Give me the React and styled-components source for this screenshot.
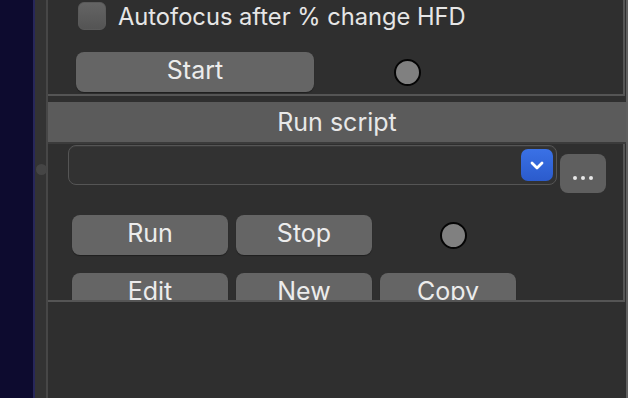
import styled, { createGlobalStyle } from "styled-components";

const GlobalStyle = createGlobalStyle`
  html, body {
    margin: 0;
    padding: 0;
    background: #0d0b2f;
    overflow: hidden;
  }
  * {
    box-sizing: border-box;
  }
`;

const Screen = styled.div`
  display: flex;
  width: 628px;
  height: 398px;
  font-family: Inter, "Liberation Sans", sans-serif;
  color: #e2e2e2;
`;

const Desktop = styled.div`
  width: 35px;
  background: #0d0b2f;
  border-right: 2px solid #27275a;
`;

const Splitter = styled.div`
  position: relative;
  width: 13px;
  background: #333333;
  border-right: 2px solid #474747;
`;

const SplitHandle = styled.div`
  position: absolute;
  left: 1px;
  top: 164px;
  width: 11px;
  height: 11px;
  border-radius: 50%;
  background: #454545;
`;

const Panel = styled.div`
  flex: 1;
  display: flex;
  flex-direction: column;
  background: #2f2f2f;
  border-right: 2px solid #5f5f5f;
`;

const Group = styled.div`
  height: ${(p) => p.$height}px;
  border-right: 2px solid #555555;
  border-bottom: 2px solid #555555;
  overflow: hidden;
`;

const TopGroup = styled(Group)`
  padding: 2px 0 0 28px;
  margin-right: 1px;
`;

const CheckRow = styled.label`
  display: flex;
  align-items: center;
  gap: 12px;
  height: 28px;
  font-size: 23.7px;
  padding-left: 2px;
  color: #e6e6e6;
`;

const Checkbox = styled.span`
  width: 28px;
  height: 28px;
  border-radius: 6px;
  background: linear-gradient(#646464, #545454);
  border: 1px solid #5a5a5a;
`;

const Row = styled.div`
  display: flex;
  align-items: center;
  gap: 8px;
  margin-top: ${(p) => p.$top || 0}px;
`;

const Button = styled.div`
  display: flex;
  align-items: center;
  justify-content: center;
  width: ${(p) => p.$w}px;
  height: 40px;
  flex-shrink: 0;
  border-radius: 8px;
  background: #656565;
  box-shadow: 0 1px 1px rgba(0, 0, 0, 0.35);
  font-size: 25px;
  line-height: 1;
  padding-bottom: 3px;
  color: #ececec;
`;

const Lamp = styled.div`
  width: 27px;
  height: 27px;
  flex-shrink: 0;
  border-radius: 50%;
  background: #808080;
  border: 2px solid #050505;
  margin-left: ${(p) => p.$left}px;
`;

const Gap = styled.div`
  height: 6px;
  margin-right: 1px;
`;

const Header = styled.div`
  height: 42px;
  display: flex;
  align-items: center;
  justify-content: center;
  background: #5b5b5b;
  border-bottom: 2px solid #3b3b3b;
  font-size: 25px;
  color: #e8e8e8;
`;

const ScriptGroup = styled(Group)`
  padding: 1px 0 0 20px;
  margin-right: 1px;
`;

const ComboRow = styled.div`
  display: flex;
  align-items: flex-start;
  gap: 3px;
`;

const Combo = styled.div`
  width: 489px;
  height: 40px;
  display: flex;
  align-items: center;
  justify-content: flex-end;
  padding-right: 3px;
  border-radius: 8px;
  border: 1px solid #555555;
  background: #323232;
  box-shadow: inset 0 1px 0 #3a3a3a;
`;

const ComboArrow = styled.div`
  width: 32px;
  height: 32px;
  display: flex;
  align-items: center;
  justify-content: center;
  border-radius: 7px;
  background: linear-gradient(#3a71e6, #2b5bcc);
`;

const MoreButton = styled.div`
  width: 46px;
  height: 39px;
  margin-top: 9px;
  display: flex;
  align-items: center;
  justify-content: center;
  gap: 4px;
  border-radius: 8px;
  background: #5f5f5f;
  padding-top: 8px;
`;

const Dot = styled.span`
  width: 4px;
  height: 4px;
  border-radius: 50%;
  background: #e8e8e8;
`;

const Buttons = styled.div`
  padding-left: 4px;
`;

const Rest = styled.div`
  flex: 1;
`;

export default function App() {
  return (
    <>
      <GlobalStyle />
      <Screen>
        <Desktop />
        <Splitter>
          <SplitHandle />
        </Splitter>
        <Panel>
          <TopGroup $height={96}>
            <CheckRow>
              <Checkbox />
              Autofocus after % change HFD
            </CheckRow>
            <Row $top={22}>
              <Button $w={238}>Start</Button>
              <Lamp $left={72} />
            </Row>
          </TopGroup>
          <Gap />
          <Header>Run script</Header>
          <ScriptGroup $height={158}>
            <ComboRow>
              <Combo>
                <ComboArrow>
                  <svg width="18" height="18" viewBox="0 0 18 18">
                    <path
                      d="M4 7 L9 12 L14 7"
                      fill="none"
                      stroke="#fff"
                      strokeWidth="2.8"
                      strokeLinecap="round"
                      strokeLinejoin="round"
                    />
                  </svg>
                </ComboArrow>
              </Combo>
              <MoreButton>
                <Dot />
                <Dot />
                <Dot />
              </MoreButton>
            </ComboRow>
            <Buttons>
              <Row $top={22}>
                <Button $w={156}>Run</Button>
                <Button $w={136}>Stop</Button>
                <Lamp $left={60} />
              </Row>
              <Row $top={18}>
                <Button $w={156}>Edit</Button>
                <Button $w={136}>New</Button>
                <Button $w={136}>Copy</Button>
              </Row>
            </Buttons>
          </ScriptGroup>
          <Rest />
        </Panel>
      </Screen>
    </>
  );
}
